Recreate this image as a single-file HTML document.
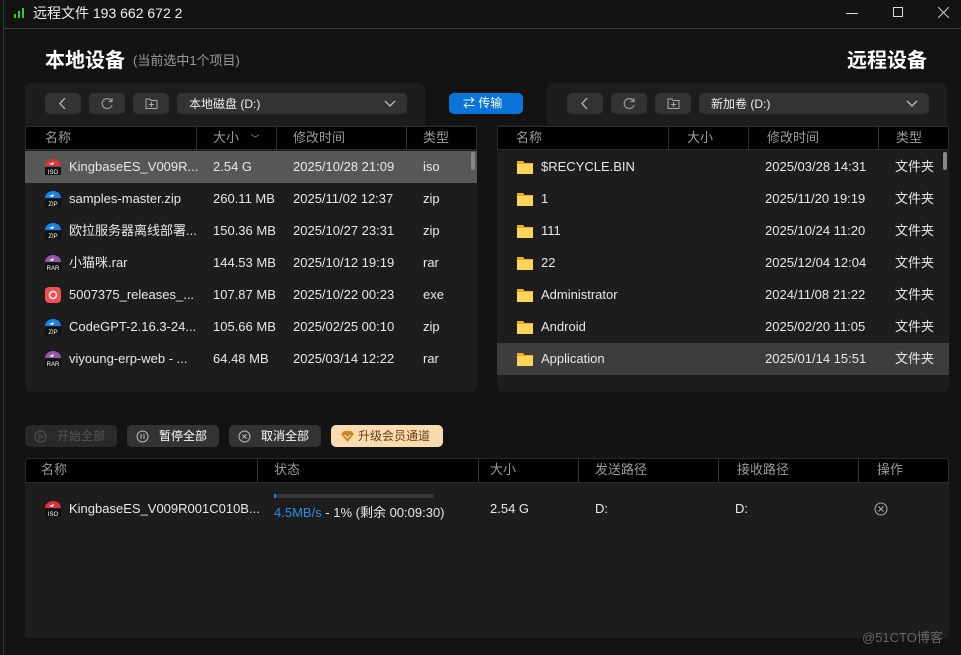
<!DOCTYPE html>
<html><head><meta charset="utf-8"><style>
*{margin:0;padding:0;box-sizing:border-box}
body{width:961px;height:655px;background:#131313;font-family:"Liberation Sans","Noto Sans CJK SC",sans-serif;color:#e8e8e8;font-size:13px;position:relative;overflow:hidden}
.a{position:absolute}
.t{position:absolute;white-space:nowrap;line-height:16px}
.hd{color:#9a9a9a;font-size:13px}
.btn{position:absolute;background:#333;border-radius:5px;height:21px}
.ic{position:absolute;width:16px;height:16px}
</style></head><body>
<div class="a" style="left:3px;top:0;width:1px;height:655px;background:#2e3a2e"></div>
<svg class="a" style="left:13px;top:7px" width="12" height="12"><rect x="1" y="7" width="2" height="4" fill="#2ecc40"/><rect x="5" y="4" width="2" height="7" fill="#2ecc40"/><rect x="9" y="1" width="2" height="10" fill="#2ecc40"/></svg>
<div class="t" style="left:33px;top:5px;font-size:14px;color:#eee">远程文件 193 662 672 2</div>
<div class="a" style="left:846px;top:13px;width:12px;height:1px;background:#ddd"></div>
<div class="a" style="left:893px;top:7px;width:10px;height:10px;border:1px solid #ddd"></div>
<svg class="a" style="left:938px;top:7px" width="11" height="11"><path d="M0 0L11 11M11 0L0 11" stroke="#ccc"/></svg>
<div class="a" style="left:4px;top:28px;width:957px;height:1px;background:#3a3a3a"></div>
<div class="t" style="left:45px;top:49px;font-size:20px;line-height:24px;font-weight:bold;color:#fff">本地设备</div>
<div class="t" style="left:133px;top:53px;font-size:13px;color:#9a9a9a">(当前选中1个项目)</div>
<div class="t" style="left:847px;top:49px;font-size:20px;line-height:24px;font-weight:bold;color:#fff">远程设备</div>

<div class="a" style="left:25px;top:83px;width:400px;height:50px;background:#1d1d1d;border-radius:6px 6px 0 0"></div>
<div class="a" style="left:25px;top:125px;width:452px;height:267px;background:#1d1d1d;border-radius:0 0 6px 6px"></div>
<div class="btn" style="left:45px;top:93px;width:36px"><svg class="a" style="left:13px;top:5px" width="10" height="11"><path d="M7 0L2 5.5L7 11" stroke="#bbb" fill="none" stroke-width="1.3"/></svg></div>
<div class="btn" style="left:89px;top:93px;width:36px"><svg class="a" style="left:12px;top:4px" width="13" height="13"><path d="M10.5 4A5 5 0 1 0 11 8" stroke="#999" fill="none" stroke-width="1.2"/><path d="M11 1V4.5H7.5" stroke="#999" fill="none" stroke-width="1.2"/></svg></div>
<div class="btn" style="left:133px;top:93px;width:36px"><svg class="a" style="left:12px;top:4px" width="13" height="13"><path d="M1 2H5L6 3.5H12V11.5H1Z" stroke="#aaa" fill="none"/><path d="M6.5 5V10M4 7.5H9" stroke="#aaa"/></svg></div>
<div class="btn" style="left:177px;top:93px;width:230px"><div class="t" style="left:12px;top:3px;font-size:12px;color:#eee">本地磁盘 (D:)</div><svg class="a" style="left:207px;top:7px" width="12" height="8"><path d="M1 1L6 6L11 1" stroke="#bbb" fill="none" stroke-width="1.3"/></svg></div>
<div class="a" style="left:449px;top:93px;width:74px;height:21px;background:#0b74d8;border-radius:5px"><div class="t" style="left:14px;top:2px;font-size:12px;color:#fff">⇄ 传输</div></div>

<div class="a" style="left:25px;top:126px;width:452px;height:24px;background:#000;border:1px solid #2a2a2a"></div>
<div class="a" style="left:196px;top:127px;width:1px;height:23px;background:#333"></div>
<div class="a" style="left:276px;top:127px;width:1px;height:23px;background:#333"></div>
<div class="a" style="left:406px;top:127px;width:1px;height:23px;background:#333"></div>
<div class="t hd" style="left:45px;top:130px">名称</div>
<div class="t hd" style="left:213px;top:130px">大小 <span style="font-size:9px;margin-left:8px">﹀</span></div>
<div class="t hd" style="left:293px;top:130px">修改时间</div>
<div class="t hd" style="left:423px;top:130px">类型</div>
<div class="a" style="left:25px;top:151px;width:452px;height:32px;background:#575757"></div>
<div class="a" style="left:471px;top:152px;width:4px;height:18px;background:#888;border-radius:2px"></div>

<svg width="0" height="0" style="position:absolute"><defs>
<g id="iso"><path d="M0 7A8 7 0 0 1 16 7Z" fill="#e0323a"/><path d="M4 5L9 3L8 6Z" fill="#fff"/><rect x="0" y="8" width="16" height="8" fill="#111"/><text x="8" y="15" font-size="6" fill="#fff" text-anchor="middle" font-family="Liberation Sans">ISO</text></g>
<g id="zip"><path d="M0 7A8 7 0 0 1 16 7Z" fill="#1e7fe0"/><path d="M4 5L9 3L8 6Z" fill="#fff"/><rect x="0" y="8" width="16" height="8" fill="#111"/><text x="8" y="15" font-size="6" fill="#fff" text-anchor="middle" font-family="Liberation Sans">ZIP</text></g>
<g id="rar"><path d="M0 7A8 7 0 0 1 16 7Z" fill="#8a5aa8"/><path d="M4 5L9 3L8 6Z" fill="#fff"/><rect x="0" y="8" width="16" height="8" fill="#111"/><text x="8" y="15" font-size="6" fill="#fff" text-anchor="middle" font-family="Liberation Sans">RAR</text></g>
<g id="exe"><rect width="16" height="16" rx="4" fill="#f05050"/><circle cx="8" cy="8" r="3.5" stroke="#fff" fill="none" stroke-width="1.4"/></g>
<g id="fd"><path d="M0 2H6L7.5 4H16V15H0Z" fill="#f2b01e"/><rect x="0" y="5" width="16" height="10" fill="#fcd45a"/></g>
</defs></svg>

<svg class="ic" style="left:45px;top:159px"><use href="#iso"/></svg>
<div class="t" style="left:69px;top:159px">KingbaseES_V009R...</div><div class="t" style="left:213px;top:159px">2.54 G</div><div class="t" style="left:293px;top:159px">2025/10/28 21:09</div><div class="t" style="left:423px;top:159px">iso</div>
<svg class="ic" style="left:45px;top:191px"><use href="#zip"/></svg>
<div class="t" style="left:69px;top:191px">samples-master.zip</div><div class="t" style="left:213px;top:191px">260.11 MB</div><div class="t" style="left:293px;top:191px">2025/11/02 12:37</div><div class="t" style="left:423px;top:191px">zip</div>
<svg class="ic" style="left:45px;top:223px"><use href="#zip"/></svg>
<div class="t" style="left:69px;top:223px">欧拉服务器离线部署...</div><div class="t" style="left:213px;top:223px">150.36 MB</div><div class="t" style="left:293px;top:223px">2025/10/27 23:31</div><div class="t" style="left:423px;top:223px">zip</div>
<svg class="ic" style="left:45px;top:255px"><use href="#rar"/></svg>
<div class="t" style="left:69px;top:255px">小猫咪.rar</div><div class="t" style="left:213px;top:255px">144.53 MB</div><div class="t" style="left:293px;top:255px">2025/10/12 19:19</div><div class="t" style="left:423px;top:255px">rar</div>
<svg class="ic" style="left:45px;top:287px"><use href="#exe"/></svg>
<div class="t" style="left:69px;top:287px">5007375_releases_...</div><div class="t" style="left:213px;top:287px">107.87 MB</div><div class="t" style="left:293px;top:287px">2025/10/22 00:23</div><div class="t" style="left:423px;top:287px">exe</div>
<svg class="ic" style="left:45px;top:319px"><use href="#zip"/></svg>
<div class="t" style="left:69px;top:319px">CodeGPT-2.16.3-24...</div><div class="t" style="left:213px;top:319px">105.66 MB</div><div class="t" style="left:293px;top:319px">2025/02/25 00:10</div><div class="t" style="left:423px;top:319px">zip</div>
<svg class="ic" style="left:45px;top:351px"><use href="#rar"/></svg>
<div class="t" style="left:69px;top:351px">viyoung-erp-web - ...</div><div class="t" style="left:213px;top:351px">64.48 MB</div><div class="t" style="left:293px;top:351px">2025/03/14 12:22</div><div class="t" style="left:423px;top:351px">rar</div>

<div class="a" style="left:547px;top:83px;width:400px;height:50px;background:#1d1d1d;border-radius:6px 6px 0 0"></div>
<div class="a" style="left:497px;top:125px;width:452px;height:267px;background:#1d1d1d;border-radius:0 0 6px 6px"></div>
<div class="btn" style="left:567px;top:93px;width:36px"><svg class="a" style="left:13px;top:5px" width="10" height="11"><path d="M7 0L2 5.5L7 11" stroke="#bbb" fill="none" stroke-width="1.3"/></svg></div>
<div class="btn" style="left:611px;top:93px;width:36px"><svg class="a" style="left:12px;top:4px" width="13" height="13"><path d="M10.5 4A5 5 0 1 0 11 8" stroke="#999" fill="none" stroke-width="1.2"/><path d="M11 1V4.5H7.5" stroke="#999" fill="none" stroke-width="1.2"/></svg></div>
<div class="btn" style="left:655px;top:93px;width:36px"><svg class="a" style="left:12px;top:4px" width="13" height="13"><path d="M1 2H5L6 3.5H12V11.5H1Z" stroke="#aaa" fill="none"/><path d="M6.5 5V10M4 7.5H9" stroke="#aaa"/></svg></div>
<div class="btn" style="left:699px;top:93px;width:230px"><div class="t" style="left:12px;top:3px;font-size:12px;color:#eee">新加卷 (D:)</div><svg class="a" style="left:207px;top:7px" width="12" height="8"><path d="M1 1L6 6L11 1" stroke="#bbb" fill="none" stroke-width="1.3"/></svg></div>

<div class="a" style="left:497px;top:126px;width:452px;height:24px;background:#000;border:1px solid #2a2a2a"></div>
<div class="a" style="left:668px;top:127px;width:1px;height:23px;background:#333"></div>
<div class="a" style="left:748px;top:127px;width:1px;height:23px;background:#333"></div>
<div class="a" style="left:878px;top:127px;width:1px;height:23px;background:#333"></div>
<div class="t hd" style="left:516px;top:130px">名称</div>
<div class="t hd" style="left:687px;top:130px">大小</div>
<div class="t hd" style="left:767px;top:130px">修改时间</div>
<div class="t hd" style="left:896px;top:130px">类型</div>
<div class="a" style="left:497px;top:343px;width:452px;height:32px;background:#3d3d3d"></div>
<div class="a" style="left:943px;top:152px;width:4px;height:18px;background:#888;border-radius:2px"></div>

<svg class="ic" style="left:517px;top:159px"><use href="#fd"/></svg><div class="t" style="left:541px;top:159px">$RECYCLE.BIN</div><div class="t" style="left:765px;top:159px">2025/03/28 14:31</div><div class="t" style="left:895px;top:159px">文件夹</div>
<svg class="ic" style="left:517px;top:191px"><use href="#fd"/></svg><div class="t" style="left:541px;top:191px">1</div><div class="t" style="left:765px;top:191px">2025/11/20 19:19</div><div class="t" style="left:895px;top:191px">文件夹</div>
<svg class="ic" style="left:517px;top:223px"><use href="#fd"/></svg><div class="t" style="left:541px;top:223px">111</div><div class="t" style="left:765px;top:223px">2025/10/24 11:20</div><div class="t" style="left:895px;top:223px">文件夹</div>
<svg class="ic" style="left:517px;top:255px"><use href="#fd"/></svg><div class="t" style="left:541px;top:255px">22</div><div class="t" style="left:765px;top:255px">2025/12/04 12:04</div><div class="t" style="left:895px;top:255px">文件夹</div>
<svg class="ic" style="left:517px;top:287px"><use href="#fd"/></svg><div class="t" style="left:541px;top:287px">Administrator</div><div class="t" style="left:765px;top:287px">2024/11/08 21:22</div><div class="t" style="left:895px;top:287px">文件夹</div>
<svg class="ic" style="left:517px;top:319px"><use href="#fd"/></svg><div class="t" style="left:541px;top:319px">Android</div><div class="t" style="left:765px;top:319px">2025/02/20 11:05</div><div class="t" style="left:895px;top:319px">文件夹</div>
<svg class="ic" style="left:517px;top:351px"><use href="#fd"/></svg><div class="t" style="left:541px;top:351px">Application</div><div class="t" style="left:765px;top:351px">2025/01/14 15:51</div><div class="t" style="left:895px;top:351px">文件夹</div>

<div class="btn" style="left:25px;top:425px;width:92px;height:22px;background:#2a2a2a"><svg class="a" style="left:9px;top:5px" width="13" height="13"><circle cx="6.5" cy="6.5" r="5.5" stroke="#555" fill="none"/><path d="M5 4L9 6.5L5 9Z" stroke="#555" fill="none"/></svg><div class="t" style="left:32px;top:3px;font-size:12px;color:#555">开始全部</div></div>
<div class="btn" style="left:127px;top:425px;width:92px;height:22px"><svg class="a" style="left:9px;top:5px" width="13" height="13"><circle cx="6.5" cy="6.5" r="5.5" stroke="#bbb" fill="none"/><path d="M5 4V9M8 4V9" stroke="#bbb"/></svg><div class="t" style="left:32px;top:3px;font-size:12px;color:#fff">暂停全部</div></div>
<div class="btn" style="left:229px;top:425px;width:92px;height:22px"><svg class="a" style="left:9px;top:5px" width="13" height="13"><circle cx="6.5" cy="6.5" r="5.5" stroke="#bbb" fill="none"/><path d="M4.5 4.5L8.5 8.5M8.5 4.5L4.5 8.5" stroke="#bbb"/></svg><div class="t" style="left:32px;top:3px;font-size:12px;color:#fff">取消全部</div></div>
<div class="btn" style="left:331px;top:425px;width:112px;height:22px;background:#fbdcae"><svg class="a" style="left:10px;top:6px" width="13" height="11"><path d="M0 3L3 0H10L13 3L6.5 11Z" fill="#c98428"/><path d="M3.5 4L6.5 7L9.5 4" stroke="#fbdcae" fill="none"/></svg><div class="t" style="left:27px;top:3px;font-size:12px;color:#6a3e0e">升级会员通道</div></div>

<div class="a" style="left:25px;top:458px;width:924px;height:180px;background:#1d1d1d;border-radius:4px"></div>
<div class="a" style="left:25px;top:458px;width:924px;height:25px;background:#000;border:1px solid #2a2a2a;border-radius:4px 4px 0 0"></div>
<div class="a" style="left:257px;top:459px;width:1px;height:23px;background:#333"></div>
<div class="a" style="left:478px;top:459px;width:1px;height:23px;background:#333"></div>
<div class="a" style="left:578px;top:459px;width:1px;height:23px;background:#333"></div>
<div class="a" style="left:718px;top:459px;width:1px;height:23px;background:#333"></div>
<div class="a" style="left:858px;top:459px;width:1px;height:23px;background:#333"></div>
<div class="t hd" style="left:41px;top:462px">名称</div>
<div class="t hd" style="left:274px;top:462px">状态</div>
<div class="t hd" style="left:490px;top:462px">大小</div>
<div class="t hd" style="left:595px;top:462px">发送路径</div>
<div class="t hd" style="left:737px;top:462px">接收路径</div>
<div class="t hd" style="left:877px;top:462px">操作</div>
<svg class="ic" style="left:45px;top:501px"><use href="#iso"/></svg>
<div class="t" style="left:69px;top:501px">KingbaseES_V009R001C010B...</div>
<div class="a" style="left:274px;top:494px;width:160px;height:4px;background:#3a3a3a;border-radius:2px"><div style="width:2px;height:4px;background:#1e7fe0"></div></div>
<div class="t" style="left:274px;top:505px"><span style="color:#2f8de4">4.5MB/s</span> - 1% (剩余 00:09:30)</div>
<div class="t" style="left:490px;top:501px">2.54 G</div>
<div class="t" style="left:595px;top:501px">D:</div>
<div class="t" style="left:735px;top:501px">D:</div>
<svg class="a" style="left:874px;top:502px" width="14" height="14"><circle cx="7" cy="7" r="6" stroke="#aaa" fill="none"/><path d="M4.5 4.5L9.5 9.5M9.5 4.5L4.5 9.5" stroke="#aaa"/></svg>
<div class="t" style="left:862px;top:630px;font-size:13px;color:#666">@51CTO博客</div>
</body></html>
